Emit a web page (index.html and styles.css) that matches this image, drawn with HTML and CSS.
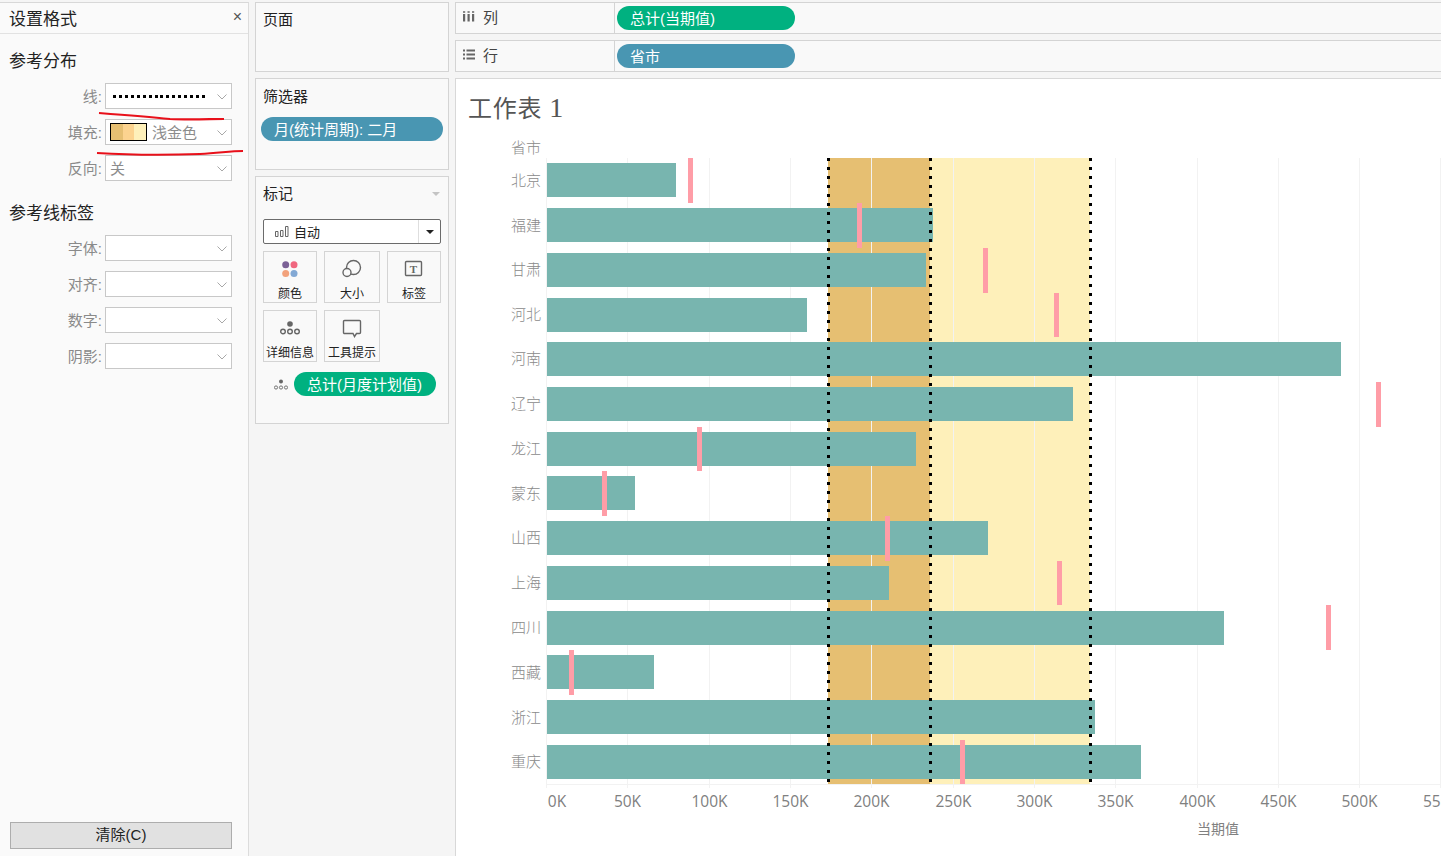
FILE: index.html
```html
<!DOCTYPE html>
<html lang="zh">
<head>
<meta charset="utf-8">
<title>工作表 1</title>
<link rel="stylesheet" href="styles.css">
</head>
<body>
<div class="app">
  <aside class="format">
    <header class="format-head"><span>设置格式</span><span class="close">×</span></header>
    <section class="group">
      <h3>参考分布</h3>
      <div class="row"><label>线:</label><div class="select"><span class="dots"></span><svg class="chev" viewBox="0 0 10 6"><path d="M.5.5 5 5 9.500.5"/></svg></div></div>
      <div class="row"><label>填充:</label><div class="select"><span class="swatch"><i class="s1"></i><i class="s2"></i><i class="s3"></i></span><span class="val gold">浅金色</span><svg class="chev" viewBox="0 0 10 6"><path d="M.5.5 5 5 9.500.5"/></svg></div></div>
      <div class="row"><label>反向:</label><div class="select"><span class="val">关</span><svg class="chev" viewBox="0 0 10 6"><path d="M.5.5 5 5 9.500.5"/></svg></div></div>
    </section>
    <section class="group second">
      <h3>参考线标签</h3>
      <div class="row"><label>字体:</label><div class="select"><svg class="chev" viewBox="0 0 10 6"><path d="M.5.5 5 5 9.500.5"/></svg></div></div>
      <div class="row"><label>对齐:</label><div class="select"><svg class="chev" viewBox="0 0 10 6"><path d="M.5.5 5 5 9.500.5"/></svg></div></div>
      <div class="row"><label>数字:</label><div class="select"><svg class="chev" viewBox="0 0 10 6"><path d="M.5.5 5 5 9.500.5"/></svg></div></div>
      <div class="row"><label>阴影:</label><div class="select"><svg class="chev" viewBox="0 0 10 6"><path d="M.5.5 5 5 9.500.5"/></svg></div></div>
    </section>
    <button class="clear">清除(C)</button>
    <svg class="scribble" viewBox="0 0 249 160"><path d="M99 113C125 115 150 117 170 119 190 120 210 119 224 119"/><path d="M97 153C130 155 170 155 200 154 220 153 230 151 243 151"/></svg>
  </aside>

  <div class="cards">
    <section class="card pages">页面</section>
    <section class="card filters">
      <div class="card-title">筛选器</div>
      <div class="pill blue filter-pill">月(统计周期): 二月</div>
    </section>
    <section class="card marks">
      <div class="marks-head"><span>标记</span><i class="tri"></i></div>
      <div class="mark-type">
        <svg class="bars-ico" viewBox="0 0 14 11"><path d="M.5 5.500h2.500v5H.5zM5.500 4.500h2.500v6H5.500zM10.500.5h2.500v10h-2.500z"/></svg>
        <span class="mark-name">自动</span>
        <span class="mark-arrow"><i></i></span>
      </div>
      <div class="mark-grid">
        <div class="mark-btn"><svg viewBox="0 0 20 20"><circle cx="5.700" cy="5.800" r="3.500" fill="#7b6196"/><circle cx="14" cy="5.800" r="3.500" fill="#f0677f"/><circle cx="5.700" cy="14.500" r="3.500" fill="#f2a27c"/><circle cx="14" cy="14.500" r="3.500" fill="#82a8d4"/></svg><span>颜色</span></div>
        <div class="mark-btn"><svg viewBox="0 0 20 20" class="line-ico"><circle cx="11.500" cy="8.500" r="7"/><circle cx="5" cy="13.500" r="4" fill="#fafafa"/></svg><span>大小</span></div>
        <div class="mark-btn"><svg viewBox="0 0 20 20" class="line-ico"><rect x="1.500" y="2.500" width="16" height="14" rx="1"/><text x="9.500" y="13.500" class="t-glyph">T</text></svg><span>标签</span></div>
        <div class="mark-btn"><svg viewBox="0 0 20 20" class="line-ico"><circle cx="10" cy="6" r="2.800" class="solid"/><circle cx="3" cy="13.500" r="2.300"/><circle cx="10" cy="13.500" r="2.300"/><circle cx="17" cy="13.500" r="2.300"/></svg><span>详细信息</span></div>
        <div class="mark-btn"><svg viewBox="0 0 20 20" class="line-ico"><path d="M2.500 2.500h15a1 1 0 0 1 1 1v11a1 1 0 0 1-1 1h-3l-2 3-1.500-3H2.500a1 1 0 0 1-1-1v-11a1 1 0 0 1 1-1z"/></svg><span>工具提示</span></div>
      </div>
      <div class="detail-row">
        <svg viewBox="0 0 14 11" class="line-ico small"><circle cx="7" cy="2.500" r="2" class="solid"/><circle cx="2" cy="8.500" r="1.600"/><circle cx="7" cy="8.500" r="1.600"/><circle cx="12" cy="8.500" r="1.600"/></svg>
        <div class="pill green detail-pill">总计(月度计划值)</div>
      </div>
    </section>
  </div>

  <main class="main">
    <div class="shelf">
      <div class="shelf-label"><svg viewBox="0 0 12 11" class="shelf-ico"><path d="M0 3h2.200v7.500H0zM4.500 3h2.200v7.500H4.500zM9 3h2.200v7.500H9zM0 .3h2.200v1.500H0zM4.500.3h2.200v1.500H4.500zM9 .3h2.200v1.500H9z"/></svg><span>列</span></div>
      <div class="pill green shelf-pill">总计(当期值)</div>
    </div>
    <div class="shelf">
      <div class="shelf-label"><svg viewBox="0 0 12 11" class="shelf-ico"><path d="M0 .5h2v2H0zM3.500.5H12v2H3.500zM0 4.500h2v2H0zM3.500 4.500H12v2H3.500zM0 8.500h2v2H0zM3.500 8.500H12v2H3.500z"/></svg><span>行</span></div>
      <div class="pill blue shelf-pill">省市</div>
    </div>
    <section class="sheet">
      <h1 class="sheet-title">工作表 <span class="sheet-num">1</span></h1>
      <svg class="chart" viewBox="455 130 986 726">
        <rect class="band-dark" x="828" y="158" width="102" height="626"/>
        <rect class="band-light" x="930" y="158" width="160" height="626"/>
        <g class="grid">
          <path d="M546.500 158V788M627.500 158V788M709.500 158V788M790.500 158V788M871.500 158V788M953.500 158V788M1034.500 158V788M1115.500 158V788M1197.500 158V788M1278.500 158V788M1359.500 158V788M1440.500 158V788"/>
          <path d="M546 784.500H1441"/>
        </g>
        <g class="bars">
          <rect x="547" y="163" width="129" height="34"/>
          <rect x="547" y="208" width="386" height="34"/>
          <rect x="547" y="253" width="379" height="34"/>
          <rect x="547" y="298" width="260" height="34"/>
          <rect x="547" y="342" width="794" height="34"/>
          <rect x="547" y="387" width="526" height="34"/>
          <rect x="547" y="432" width="369" height="34"/>
          <rect x="547" y="476" width="88" height="34"/>
          <rect x="547" y="521" width="441" height="34"/>
          <rect x="547" y="566" width="342" height="34"/>
          <rect x="547" y="611" width="677" height="34"/>
          <rect x="547" y="655" width="107" height="34"/>
          <rect x="547" y="700" width="548" height="34"/>
          <rect x="547" y="745" width="594" height="34"/>
        </g>
        <path class="refline" d="M828.500 158V784M930.500 158V784M1090.500 158V784"/>
        <g class="ticks">
          <rect x="688" y="158" width="5" height="45"/>
          <rect x="857" y="203" width="5" height="45"/>
          <rect x="983" y="248" width="5" height="45"/>
          <rect x="1054" y="293" width="5" height="44"/>
          <rect x="1376" y="382" width="5" height="45"/>
          <rect x="697" y="427" width="5" height="44"/>
          <rect x="602" y="471" width="5" height="45"/>
          <rect x="885" y="516" width="5" height="45"/>
          <rect x="1057" y="561" width="5" height="44"/>
          <rect x="1326" y="605" width="5" height="45"/>
          <rect x="569" y="650" width="5" height="45"/>
          <rect x="960" y="740" width="5" height="44"/>
        </g>
        <g class="row-labels">
          <text x="541" y="153">省市</text>
          <text x="541" y="186">北京</text>
          <text x="541" y="231">福建</text>
          <text x="541" y="275">甘肃</text>
          <text x="541" y="320">河北</text>
          <text x="541" y="364">河南</text>
          <text x="541" y="409">辽宁</text>
          <text x="541" y="454">龙江</text>
          <text x="541" y="499">蒙东</text>
          <text x="541" y="543">山西</text>
          <text x="541" y="588">上海</text>
          <text x="541" y="633">四川</text>
          <text x="541" y="678">西藏</text>
          <text x="541" y="723">浙江</text>
          <text x="541" y="767">重庆</text>
        </g>
        <g class="axis-labels">
          <text x="557" y="807">0K</text>
          <text x="627.500" y="807">50K</text>
          <text x="709.500" y="807">100K</text>
          <text x="790.500" y="807">150K</text>
          <text x="871.500" y="807">200K</text>
          <text x="953.500" y="807">250K</text>
          <text x="1034.500" y="807">300K</text>
          <text x="1115.500" y="807">350K</text>
          <text x="1197.500" y="807">400K</text>
          <text x="1278.500" y="807">450K</text>
          <text x="1359.500" y="807">500K</text>
          <text x="1441" y="807">550K</text>
          <text x="1218" y="834" class="axis-title">当期值</text>
        </g>
      </svg>
    </section>
  </main>
</div>
</body>
</html>
```
FILE: styles.css
```css
* { box-sizing: border-box; }
html, body { margin: 0; height: 100%; overflow: hidden; }
body {
  background: #f5f5f5;
  font-family: "Liberation Sans", "Noto Sans CJK SC", sans-serif;
  color: #222;
  font-size: 15px;
}
.app { display: flex; height: 856px; padding-top: 2px; gap: 6px; }

/* format pane */
.format {
  position: relative;
  width: 249px;
  flex: none;
  margin-top: 0;
  background: #fafafa;
  border-top: 1px solid #d8d8d8;
  border-right: 1px solid #dcdcdc;
  display: flex;
  flex-direction: column;
}
.format-head {
  height: 31px;
  flex: none;
  display: flex;
  justify-content: space-between;
  align-items: center;
  padding: 0 6px 2px 9px;
  border-bottom: 1px solid #e2e2e2;
  font-size: 17px;
  color: #222;
}
.close { font-size: 16px; color: #555; }
.group { padding: 0 16px 0 0; display: flex; flex-direction: column; gap: 10px; }
.group h3 {
  margin: 17px 0 0 9px;
  height: 22px;
  line-height: 22px;
  font-size: 17px;
  font-weight: 400;
  color: #222;
}
.group.second { margin-top: 5px; }
.row { display: flex; justify-content: flex-end; align-items: center; height: 26px; }
.row label { font-size: 15px; color: #8a8a8a; margin: 0 3px 2px 0; }
.select {
  width: 127px;
  height: 26px;
  background: #fff;
  border: 1px solid #c8c8c8;
  display: flex;
  align-items: center;
  padding-left: 4px;
  position: relative;
}
.chev { width: 10px; height: 6px; position: absolute; right: 4px; top: 10px; fill: none; stroke: #a8a8a8; }
.dots {
  width: 95px;
  height: 3px;
  margin-left: 3px;
  background: repeating-linear-gradient(90deg, #000 0 3px, transparent 3px 5.930px);
}
.swatch { display: flex; width: 37px; height: 18px; border: 1px solid #000; flex: none; }
.swatch i { flex: 1; }
.s1 { background: #e6bf72; }
.s2 { background: #fcd38f; }
.s3 { background: #fef0ba; }
.val { font-size: 15px; color: #8c8c8c; margin-bottom: 2px; }
.gold { margin-left: 5px; }
.clear {
  margin: auto 0 7px 10px;
  width: 222px;
  height: 27px;
  flex: none;
  background: #e1e1e1;
  border: 1px solid #adadad;
  font: inherit;
  color: #222;
  padding: 0 0 4px;
}
.scribble {
  position: absolute;
  left: 0;
  top: -3px;
  width: 249px;
  height: 160px;
  fill: none;
  stroke: #e8101a;
  stroke-width: 2.200;
  pointer-events: none;
}

/* middle cards */
.cards { width: 194px; flex: none; display: flex; flex-direction: column; gap: 6px; }
.card { background: #f9f9f9; border: 1px solid #d4d4d4; padding: 0 7px; }
.pages { height: 70px; padding-top: 8px; line-height: 18px; }
.filters { height: 92px; }
.card-title { margin-top: 9px; height: 18px; line-height: 18px; }
.pill {
  border-radius: 12px;
  height: 24px;
  line-height: 25px;
  color: #fff;
  font-size: 15px;
  padding-left: 13px;
  white-space: nowrap;
}
.green { background: #00b180; }
.blue { background: #4996b2; }
.filter-pill { margin: 11px -2px 0 -2px; }
.marks { height: 248px; }
.marks-head {
  margin-top: 7px;
  height: 20px;
  line-height: 20px;
  display: flex;
  justify-content: space-between;
  align-items: center;
}
.tri {
  width: 0;
  height: 0;
  margin-right: 1px;
  border: 4px solid transparent;
  border-top: 4px solid #c4c4c4;
  border-bottom: 0;
}
.mark-type {
  margin-top: 15px;
  height: 25px;
  background: #fff;
  border: 1px solid #6b6b6b;
  border-radius: 2px;
  display: flex;
  align-items: center;
  padding-left: 11px;
  font-size: 13px;
}
.bars-ico { width: 14px; height: 11px; fill: none; stroke: #666; }
.mark-name { margin-left: 5px; }
.mark-arrow {
  margin-left: auto;
  width: 22px;
  height: 100%;
  border-left: 1px solid #dedede;
  display: flex;
  align-items: center;
  justify-content: center;
}
.mark-arrow i {
  width: 0;
  height: 0;
  border: 4px solid transparent;
  border-top: 4px solid #222;
  border-bottom: 0;
}
.mark-grid {
  margin-top: 7px;
  display: grid;
  grid-template-columns: 54px 56px 54px;
  grid-auto-rows: 52px;
  gap: 7px;
}
.mark-btn {
  border: 1px solid #d4d4d4;
  display: flex;
  flex-direction: column;
  align-items: center;
  padding-top: 7px;
  font-size: 12px;
  white-space: nowrap;
}
.mark-btn svg { width: 20px; height: 20px; flex: none; }
.mark-btn span { margin-top: 7px; line-height: 16px; }
.line-ico { fill: none; stroke: #666; stroke-width: 1.400; }
.line-ico .solid { fill: #666; stroke: none; }
.t-glyph {
  font-family: "Liberation Serif", serif;
  font-size: 11px;
  font-weight: 700;
  text-anchor: middle;
  fill: #666;
  stroke: none;
}
.detail-row { margin-top: 10px; display: flex; align-items: center; }
.small { width: 14px; height: 11px; margin: 0 6px 0 11px; stroke-width: .9; }
.detail-pill { width: 142px; }

/* right side */
.main { flex: 1; min-width: 0; display: flex; flex-direction: column; gap: 6px; }
.shelf {
  height: 32px;
  flex: none;
  background: #f9f9f9;
  border: 1px solid #d4d4d4;
  border-right: 0;
  display: flex;
  align-items: center;
}
.shelf-label {
  width: 159px;
  height: 100%;
  flex: none;
  border-right: 1px solid #d4d4d4;
  display: flex;
  align-items: center;
  padding: 0 0 3px 7px;
  gap: 8px;
  color: #444;
}
.shelf-ico { width: 12px; height: 11px; fill: #666; }
.shelf-pill { width: 178px; margin-left: 2px; }
.sheet {
  flex: 1;
  min-height: 0;
  background: #fff;
  border-top: 1px solid #d8d8d8;
  border-left: 1px solid #d8d8d8;
  overflow: hidden;
}
.sheet-title {
  margin: 0;
  height: 51px;
  padding: 14px 0 0 12px;
  line-height: 30px;
  font-family: "Liberation Serif", "Noto Sans CJK SC", serif;
  font-size: 24px;
  font-weight: 400;
  letter-spacing: .8px;
  color: #555;
}
.sheet-num { font-size: 28px; }
.chart { display: block; width: 986px; height: 726px; margin-left: -1px; }
.band-dark { fill: #e6bf72; }
.band-light { fill: #fef0ba; }
.grid path { fill: none; stroke: #f2f2f2; }
.bars rect { fill: #78b5af; }
.refline { fill: none; stroke: #000; stroke-width: 3; stroke-dasharray: 3 6; }
.ticks rect { fill: #ff9da7; }
.row-labels text {
  font-family: "Noto Sans CJK SC", sans-serif;
  font-size: 15px;
  font-weight: 300;
  fill: #8a8a8a;
  text-anchor: end;
}
.axis-labels text {
  font-family: "Open Sans", sans-serif;
  font-size: 15.500px;
  fill: #808080;
  text-anchor: middle;
}
.axis-labels .axis-title {
  font-family: "Noto Sans CJK SC", sans-serif;
  font-size: 14px;
}
```
